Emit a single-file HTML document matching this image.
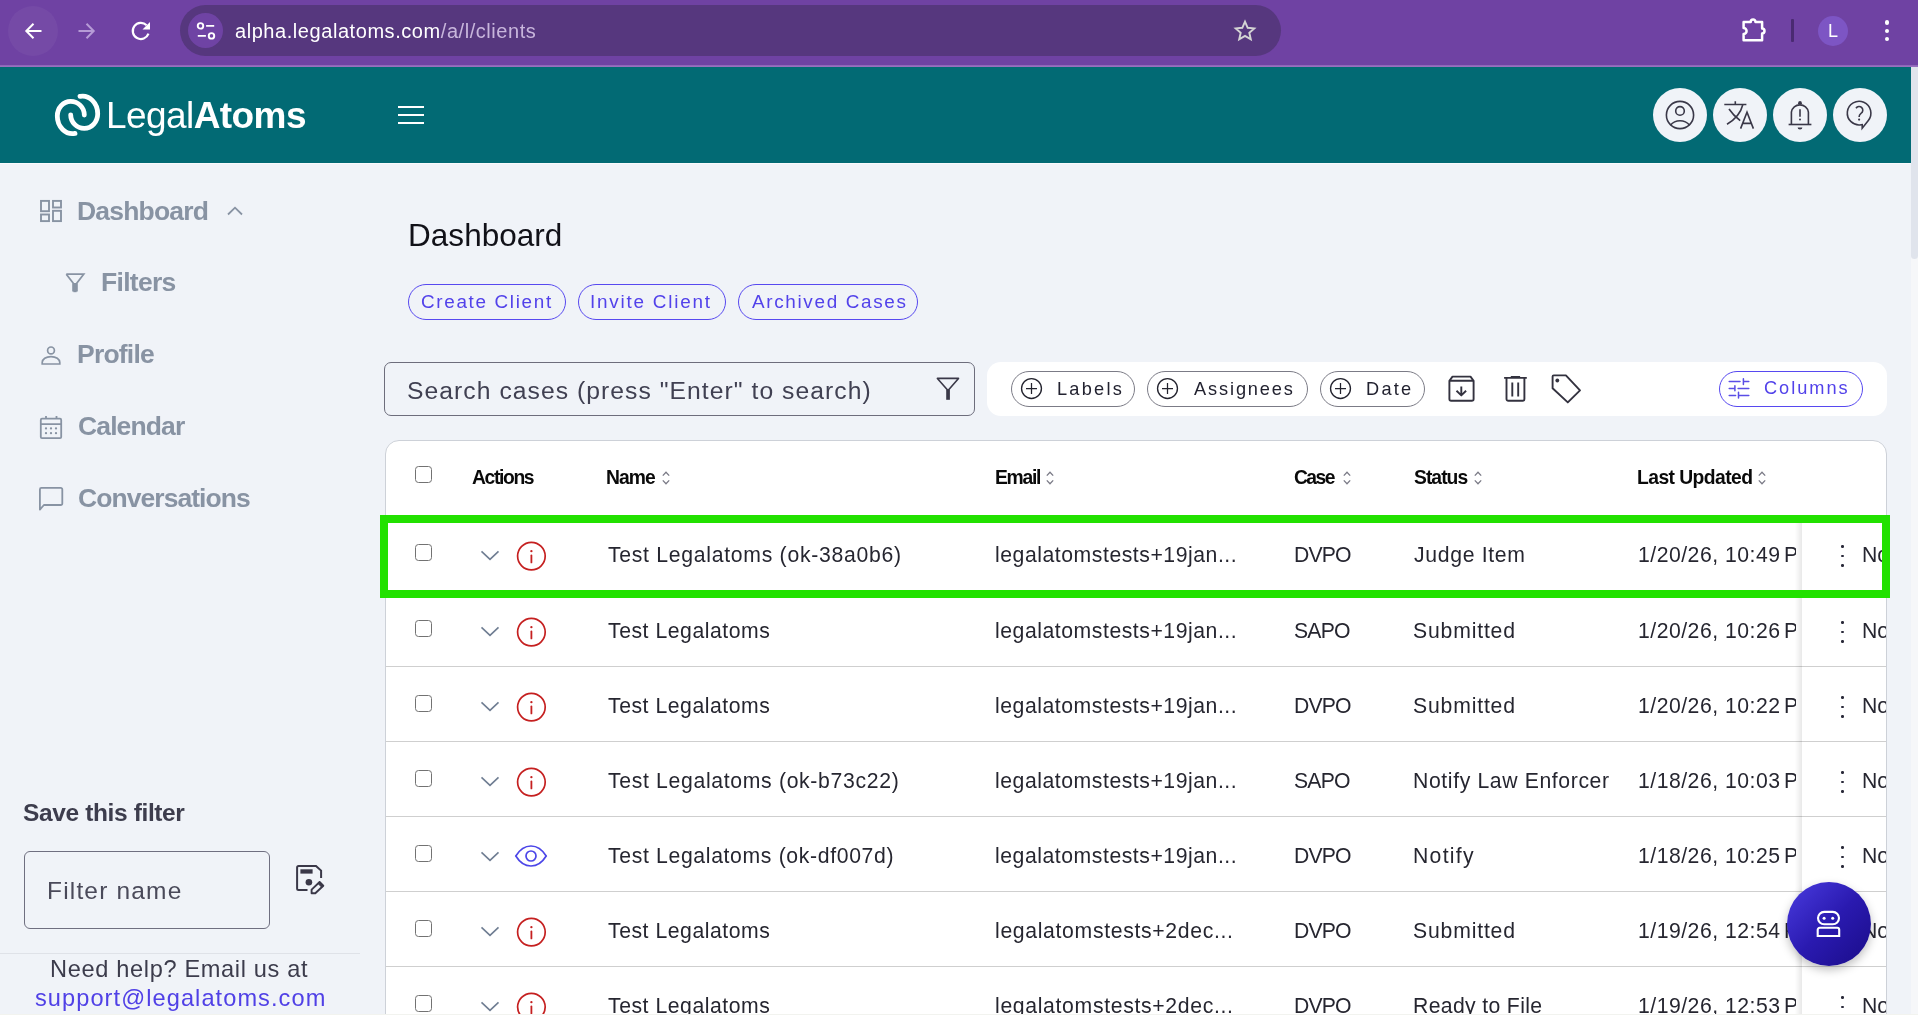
<!DOCTYPE html>
<html><head><meta charset="utf-8">
<style>
html,body{margin:0;padding:0;}
body{width:1918px;height:1015px;overflow:hidden;position:relative;background:#f0f3f8;font-family:"Liberation Sans",sans-serif;}
.a{position:absolute;}
.t{position:absolute;line-height:1;white-space:pre;will-change:transform;}
svg{position:absolute;overflow:visible;}
.cb{position:absolute;width:14.6px;height:14.6px;border:1.7px solid #727272;border-radius:3.5px;background:#fff;}
.pill{position:absolute;border:1px solid #7b7b86;border-radius:19px;box-sizing:border-box;}
.bpill{position:absolute;border:1px solid #5749f0;border-radius:19px;box-sizing:border-box;}
.hc{position:absolute;width:54px;height:54px;border-radius:50%;background:#f0f3f8;top:88px;}
.rb{position:absolute;left:386px;width:1500px;height:1px;background:#cfcfcf;}
</style></head>
<body>
<!-- browser chrome -->
<div class="a" style="left:0;top:0;width:1918px;height:65px;background:#6f42a3;"></div>
<div class="a" style="left:0;top:65px;width:1918px;height:2px;background:linear-gradient(#8a63b6,#9c74c2);"></div>
<div class="a" style="left:8px;top:5.5px;width:50px;height:50px;border-radius:50%;background:rgba(255,255,255,0.045);"></div>
<svg style="left:24px;top:22px" width="18" height="18" viewBox="0 0 18 18"><path d="M17.5 9H2.5M9.5 1.8L2.3 9l7.2 7.2" fill="none" stroke="#fff" stroke-width="2"/></svg>
<svg style="left:78px;top:22px" width="18" height="18" viewBox="0 0 18 18"><path d="M0.5 9H15.5M8.5 1.8L15.7 9l-7.2 7.2" fill="none" stroke="#b69bd6" stroke-width="2"/></svg>
<svg style="left:132px;top:22px" width="18" height="18" viewBox="0 0 18 18"><path d="M16.5 11.7A8.1 8.1 0 1 1 14.6 3.2" fill="none" stroke="#fff" stroke-width="2.2"/><path d="M18 0V7.5H10.5z" fill="#fff"/></svg>
<div class="a" style="left:180px;top:5px;width:1101px;height:51px;border-radius:25.5px;background:#56377e;"></div>
<div class="a" style="left:187.9px;top:13px;width:35.2px;height:35.2px;border-radius:50%;background:#6f43a4;"></div>
<svg style="left:196px;top:21px" width="18" height="18" viewBox="0 0 18 18"><circle cx="4.5" cy="4.9" r="2.75" fill="none" stroke="#fff" stroke-width="1.9"/><path d="M10.1 4.9H18.2M1.8 14.9H9.9" stroke="#fff" stroke-width="1.9"/><circle cx="15.5" cy="14.9" r="2.75" fill="none" stroke="#fff" stroke-width="1.9"/></svg>
<svg style="left:1233px;top:19px" width="24" height="24" viewBox="0 0 24 24"><path d="M12 2.6l2.7 6.2 6.6.6-5 4.4 1.5 6.6L12 16.9l-5.8 3.5 1.5-6.6-5-4.4 6.6-.6z" fill="none" stroke="#d4d4d4" stroke-width="1.9" stroke-linejoin="miter"/></svg>
<svg style="left:1742px;top:17px" width="26" height="26" viewBox="0 0 26 26"><path d="M1.6 4.9H8.7A2.4 2.4 0 0 1 13.5 4.9H20.1V11.6A2.4 2.4 0 0 1 20.1 16.4V23.3H1.6V17A3 3 0 0 0 1.6 11V4.9z" fill="none" stroke="#fff" stroke-width="2.5" stroke-linejoin="round"/></svg>
<div class="a" style="left:1791px;top:19px;width:2.6px;height:23px;background:#4a2a72;border-radius:1px;"></div>
<div class="a" style="left:1818px;top:15.8px;width:30px;height:30px;border-radius:50%;background:#7d55c4;"></div>
<div class="a" style="left:1827.6px;top:21.8px;color:#fff;font:400 18px/1 'Liberation Sans';will-change:transform;">L</div>
<div class="a" style="left:1884.6px;top:20.4px;width:4.2px;height:4.2px;border-radius:50%;background:#fff;"></div>
<div class="a" style="left:1884.6px;top:28.7px;width:4.2px;height:4.2px;border-radius:50%;background:#fff;"></div>
<div class="a" style="left:1884.6px;top:37px;width:4.2px;height:4.2px;border-radius:50%;background:#fff;"></div>

<!-- app header -->
<div class="a" style="left:0;top:67px;width:1911px;height:96px;background:#026a74;"></div>
<div class="a" style="left:0;top:163px;width:1911px;height:1px;background:#f9fafc;"></div>
<svg style="left:50px;top:88px" width="56" height="54" viewBox="0 0 56 54">
<g fill="none" stroke="#fff" stroke-width="4.8" stroke-linecap="round">
<path d="M34.3 27 A13.6 13.6 0 0 0 20.7 13.4 A13.4 14.6 0 0 0 7.3 28 A15.2 17.6 0 0 0 25 45.4"/>
<path d="M34.3 27 A13.6 13.6 0 0 0 20.7 13.4 A13.4 14.6 0 0 0 7.3 28 A15.2 17.6 0 0 0 25 45.4" transform="rotate(180 27.5 26.9)"/>
</g></svg>
<div class="a" style="left:398px;top:106px;width:26px;height:2px;background:#fff;"></div>
<div class="a" style="left:398px;top:114px;width:26px;height:2px;background:#fff;"></div>
<div class="a" style="left:398px;top:122px;width:26px;height:2px;background:#fff;"></div>
<div class="hc" style="left:1653px;"></div>
<div class="hc" style="left:1713px;"></div>
<div class="hc" style="left:1773px;"></div>
<div class="hc" style="left:1833px;"></div>
<!-- person -->
<svg style="left:1665px;top:100px" width="30" height="30" viewBox="0 0 30 30"><g fill="none" stroke="#3a3848" stroke-width="1.6"><circle cx="15" cy="15" r="13.6"/><circle cx="15" cy="10.9" r="4.3"/><path d="M5.4 25.2C8 22 11.3 20.7 15 20.7s7 1.3 9.6 4.5"/></g></svg>
<!-- translate -->
<svg style="left:1722px;top:99px" width="36" height="32" viewBox="0 0 36 32"><g fill="none" stroke="#3a3848" stroke-width="1.6"><path d="M2.3 5.5H24.4M13.3 2.3v3.2M20.9 5.5C19 13 14 20 5 25.2M7 10c3 4.5 6.5 8 11.2 11.7"/><path d="M18.6 29.6L25 13.2l6.4 16.4M20.6 24.4h8.8"/></g></svg>
<!-- bell -->
<svg style="left:1787px;top:100px" width="26" height="31" viewBox="0 0 26 31"><g fill="none" stroke="#3a3848" stroke-width="1.6"><path d="M4.4 24.4V12.2A8.6 8.6 0 0 1 21.4 12.2V24.4"/><path d="M1.6 24.5H24.4"/><path d="M13 9.3v7.5"/></g><circle cx="13" cy="19.6" r="1" fill="#3a3848"/><path d="M10.8 4.2L11.6 1.6Q13 0.5 14.4 1.6L15.2 4.2z" fill="#3a3848"/><path d="M10.6 27.4h4.8a2.4 2.1 0 0 1-4.8 0z" fill="#3a3848"/></svg>
<!-- help -->
<svg style="left:1846px;top:100px" width="28" height="30" viewBox="0 0 28 30"><g fill="none" stroke="#3a3848" stroke-width="1.6"><path d="M15.15 24.72A11.8 11.8 0 1 1 22.14 20.68L16.2 28.2V24.6z"/><path d="M10 8.2A3.7 3.7 0 1 1 15 13.4C13.6 14.5 13.1 15.7 13.1 16.9"/></g><circle cx="13.1" cy="19.6" r="1.1" fill="#3a3848"/></svg>

<!-- scrollbar -->
<div class="a" style="left:1911px;top:67px;width:7px;height:948px;background:#f6f7f9;"></div>
<div class="a" style="left:1911px;top:67px;width:7px;height:192px;background:#e0e4ec;border-radius:0 0 3.5px 3.5px;"></div>

<!-- sidebar icons -->
<svg style="left:39px;top:199px" width="24" height="24" viewBox="0 0 24 24"><g fill="none" stroke="#8893a3" stroke-width="1.9"><rect x="2" y="1.9" width="8" height="10.3"/><rect x="14" y="1.9" width="8" height="6.6"/><rect x="2" y="15.5" width="8" height="6.6"/><rect x="14" y="11.8" width="8" height="10.3"/></g></svg>
<svg style="left:225px;top:204px" width="20" height="14" viewBox="0 0 20 14"><path d="M3 10.5L10 3.7l7 6.8" fill="none" stroke="#8893a3" stroke-width="1.8"/></svg>
<svg style="left:64px;top:272px" width="22" height="22" viewBox="0 0 22 22"><path d="M2.3 2.2h17.4L12.9 11v8.6" fill="none" stroke="#8893a3" stroke-width="1.8" stroke-linejoin="miter"/><path d="M2.3 2.2L9.1 11v8.6" fill="none" stroke="#8893a3" stroke-width="1.8"/><rect x="9.4" y="11" width="3.2" height="9.2" fill="#8893a3"/></svg>
<svg style="left:40px;top:345px" width="22" height="21" viewBox="0 0 22 21"><g fill="none" stroke="#8893a3" stroke-width="1.7"><circle cx="11" cy="5.4" r="3.4"/><path d="M2.2 19V17.6C2.2 14 6 11.6 11 11.6s8.8 2.4 8.8 6v1.4z"/></g></svg>
<svg style="left:39px;top:414px" width="24" height="26" viewBox="0 0 24 26"><g fill="none" stroke="#8893a3" stroke-width="1.8"><rect x="1.8" y="4.7" width="20.4" height="19.4" rx="1.2"/><path d="M1.8 10.2H22.2M7 2v2.7M17.5 2v2.7"/></g><g fill="#8893a3"><circle cx="7" cy="14.4" r="1.15"/><circle cx="12" cy="14.4" r="1.15"/><circle cx="17" cy="14.4" r="1.15"/><circle cx="7" cy="19.2" r="1.15"/><circle cx="12" cy="19.2" r="1.15"/><circle cx="17" cy="19.2" r="1.15"/></g></svg>
<svg style="left:38px;top:486px" width="26" height="26" viewBox="0 0 26 26"><path d="M1.9 23.6V3.4a1.5 1.5 0 0 1 1.5-1.5H22.8a1.5 1.5 0 0 1 1.5 1.5V17.5a1.5 1.5 0 0 1-1.5 1.5H5.9z" fill="none" stroke="#8893a3" stroke-width="1.8" stroke-linejoin="round"/></svg>

<!-- save filter -->
<div class="a" style="left:24px;top:851px;width:246px;height:78px;box-sizing:border-box;border:1.2px solid #6f6f80;border-radius:6px;"></div>
<svg style="left:294px;top:864px" width="32" height="32" viewBox="0 0 32 32"><path d="M13.5 25.9H4.6a1.5 1.5 0 0 1-1.5-1.5V3.4a1.5 1.5 0 0 1 1.5-1.5H22L27.1 6.6V14.1" fill="none" stroke="#3a3848" stroke-width="2"/><rect x="6.4" y="5.3" width="12.2" height="4.3" fill="#3a3848"/><circle cx="14.9" cy="18.2" r="3.3" fill="#3a3848"/><path d="M17.6 25.6V29.3H21.3L29.3 21.7 25.6 18z" fill="none" stroke="#3a3848" stroke-width="1.9" stroke-linejoin="round"/><path d="M25.6 18L29.3 21.7 27.7 23.2 24 19.5z" fill="#3a3848" stroke="#3a3848" stroke-width="1"/></svg>
<div class="a" style="left:0;top:953px;width:360px;height:1px;background:#dfe2e8;"></div>

<!-- buttons -->
<div class="bpill" style="left:408px;top:284px;width:158px;height:36px;"></div>
<div class="bpill" style="left:578px;top:284px;width:148px;height:36px;"></div>
<div class="bpill" style="left:738px;top:284px;width:180px;height:36px;"></div>

<!-- search -->
<div class="a" style="left:384px;top:362px;width:591px;height:54px;box-sizing:border-box;border:1.2px solid #6d6d7c;border-radius:7px;"></div>
<svg style="left:935px;top:377px" width="26" height="24" viewBox="0 0 26 24"><path d="M2.4 1.4H23.5L13 13.6z" fill="none" stroke="#3a3848" stroke-width="1.6" stroke-linejoin="round"/><rect x="11.2" y="12.6" width="3.7" height="10.2" fill="#3a3848"/></svg>

<!-- toolbar -->
<div class="a" style="left:987px;top:362px;width:900px;height:54px;background:#fff;border-radius:14px;"></div>
<div class="pill" style="left:1011px;top:371px;width:124px;height:36px;"></div>
<div class="pill" style="left:1147px;top:371px;width:161px;height:36px;"></div>
<div class="pill" style="left:1320px;top:371px;width:105px;height:36px;"></div>
<svg style="left:1020px;top:377px" width="23" height="23" viewBox="0 0 23 23"><g fill="none" stroke="#23232e"><circle cx="11.5" cy="11.5" r="9.95" stroke-width="1.35"/><path d="M11.5 6v11M6 11.5h11" stroke-width="1.25"/></g></svg>
<svg style="left:1156px;top:377px" width="23" height="23" viewBox="0 0 23 23"><g fill="none" stroke="#23232e"><circle cx="11.5" cy="11.5" r="9.95" stroke-width="1.35"/><path d="M11.5 6v11M6 11.5h11" stroke-width="1.25"/></g></svg>
<svg style="left:1329px;top:377px" width="23" height="23" viewBox="0 0 23 23"><g fill="none" stroke="#23232e"><circle cx="11.5" cy="11.5" r="9.95" stroke-width="1.35"/><path d="M11.5 6v11M6 11.5h11" stroke-width="1.25"/></g></svg>
<!-- archive -->
<svg style="left:1447px;top:374px" width="30" height="30" viewBox="0 0 30 30"><g fill="none" stroke="#33323f" stroke-width="1.9" stroke-linejoin="round"><path d="M2.4 6.7L5.5 2.6H23.5L26.6 6.7V25a1.8 1.8 0 0 1-1.8 1.8H4.2A1.8 1.8 0 0 1 2.4 25z M2.4 6.7H26.6 M14.3 12.4V21.4 M9.5 16.8L14.3 21.4 19.1 16.8"/></g></svg>
<!-- trash -->
<svg style="left:1502px;top:374px" width="28" height="30" viewBox="0 0 28 30"><g fill="none" stroke="#33323f" stroke-width="1.9"><path d="M2.1 3.9H24.8M4.5 3.9V25a1.8 1.8 0 0 0 1.8 1.8H20.6a1.8 1.8 0 0 0 1.8-1.8V3.9M10.3 8.5v14M16.2 8.5v14"/></g><rect x="8.8" y="2" width="9.3" height="1.6" fill="#33323f"/></svg>
<!-- tag -->
<svg style="left:1550px;top:373px" width="34" height="32" viewBox="0 0 34 32"><path d="M2.6 3.6a1.2 1.2 0 0 1 1.2-1.2H15.9L30 17.3 17.8 29.4 2.6 15.3z" fill="none" stroke="#33323f" stroke-width="1.9" stroke-linejoin="round"/><circle cx="7.3" cy="7.5" r="1.9" fill="#33323f"/></svg>
<div class="bpill" style="left:1719px;top:371px;width:144px;height:36px;"></div>
<svg style="left:1728px;top:377px" width="22" height="22" viewBox="0 0 22 22"><g fill="none" stroke="#5a4de6" stroke-width="1.5"><path d="M1.2 4.4H12M15.4 1.7V7.5M15.4 4.4H20.8M1.2 11.5H7M6.9 8.7V13.8M10.1 11.5H20.8M1.2 18.4H7.6M10.5 15.3V21M10.5 18.4H20.8" stroke-linecap="round"/></g></svg>

<!-- table card -->
<div class="a" style="left:385px;top:440px;width:1502px;height:620px;background:#fff;box-sizing:border-box;border:1px solid #cdd1d8;border-radius:14px;"></div>
<div class="rb" style="top:516px;"></div>
<div class="rb" style="top:591px;"></div>
<div class="rb" style="top:666px;"></div>
<div class="rb" style="top:741px;"></div>
<div class="rb" style="top:816px;"></div>
<div class="rb" style="top:891px;"></div>
<div class="rb" style="top:966px;"></div>
<div class="cb" style="left:415px;top:466px;"></div>
<svg style="left:662.0px;top:471px" width="8" height="14" viewBox="0 0 8 14"><path d="M0.8 4.6L4 1.3l3.2 3.3M0.8 9.4L4 12.7l3.2-3.3" fill="none" stroke="#7a7a86" stroke-width="1.3"/></svg>
<svg style="left:1046.3px;top:471px" width="8" height="14" viewBox="0 0 8 14"><path d="M0.8 4.6L4 1.3l3.2 3.3M0.8 9.4L4 12.7l3.2-3.3" fill="none" stroke="#7a7a86" stroke-width="1.3"/></svg>
<svg style="left:1342.5px;top:471px" width="8" height="14" viewBox="0 0 8 14"><path d="M0.8 4.6L4 1.3l3.2 3.3M0.8 9.4L4 12.7l3.2-3.3" fill="none" stroke="#7a7a86" stroke-width="1.3"/></svg>
<svg style="left:1474.0px;top:471px" width="8" height="14" viewBox="0 0 8 14"><path d="M0.8 4.6L4 1.3l3.2 3.3M0.8 9.4L4 12.7l3.2-3.3" fill="none" stroke="#7a7a86" stroke-width="1.3"/></svg>
<svg style="left:1757.7px;top:471px" width="8" height="14" viewBox="0 0 8 14"><path d="M0.8 4.6L4 1.3l3.2 3.3M0.8 9.4L4 12.7l3.2-3.3" fill="none" stroke="#7a7a86" stroke-width="1.3"/></svg>
<div class="cb" style="left:415px;top:544px;"></div>
<svg style="left:480px;top:549px" width="20" height="12" viewBox="0 0 20 12"><path d="M1.5 2.3L10 10.3l8.5-8" fill="none" stroke="#6f7d92" stroke-width="1.6"/></svg>
<svg style="left:516px;top:541px" width="31" height="31" viewBox="0 0 31 31"><circle cx="15.4" cy="15.1" r="13.8" fill="none" stroke="#c52020" stroke-width="1.7"/><path d="M15.4 14.4V21.4" stroke="#c52020" stroke-width="1.8" stroke-linecap="round"/><circle cx="15.4" cy="10.2" r="1.15" fill="#c52020"/></svg>
<div class="cb" style="left:415px;top:620px;"></div>
<svg style="left:480px;top:625px" width="20" height="12" viewBox="0 0 20 12"><path d="M1.5 2.3L10 10.3l8.5-8" fill="none" stroke="#6f7d92" stroke-width="1.6"/></svg>
<svg style="left:516px;top:617px" width="31" height="31" viewBox="0 0 31 31"><circle cx="15.4" cy="15.1" r="13.8" fill="none" stroke="#c52020" stroke-width="1.7"/><path d="M15.4 14.4V21.4" stroke="#c52020" stroke-width="1.8" stroke-linecap="round"/><circle cx="15.4" cy="10.2" r="1.15" fill="#c52020"/></svg>
<div class="cb" style="left:415px;top:695px;"></div>
<svg style="left:480px;top:700px" width="20" height="12" viewBox="0 0 20 12"><path d="M1.5 2.3L10 10.3l8.5-8" fill="none" stroke="#6f7d92" stroke-width="1.6"/></svg>
<svg style="left:516px;top:692px" width="31" height="31" viewBox="0 0 31 31"><circle cx="15.4" cy="15.1" r="13.8" fill="none" stroke="#c52020" stroke-width="1.7"/><path d="M15.4 14.4V21.4" stroke="#c52020" stroke-width="1.8" stroke-linecap="round"/><circle cx="15.4" cy="10.2" r="1.15" fill="#c52020"/></svg>
<div class="cb" style="left:415px;top:770px;"></div>
<svg style="left:480px;top:775px" width="20" height="12" viewBox="0 0 20 12"><path d="M1.5 2.3L10 10.3l8.5-8" fill="none" stroke="#6f7d92" stroke-width="1.6"/></svg>
<svg style="left:516px;top:767px" width="31" height="31" viewBox="0 0 31 31"><circle cx="15.4" cy="15.1" r="13.8" fill="none" stroke="#c52020" stroke-width="1.7"/><path d="M15.4 14.4V21.4" stroke="#c52020" stroke-width="1.8" stroke-linecap="round"/><circle cx="15.4" cy="10.2" r="1.15" fill="#c52020"/></svg>
<div class="cb" style="left:415px;top:845px;"></div>
<svg style="left:480px;top:850px" width="20" height="12" viewBox="0 0 20 12"><path d="M1.5 2.3L10 10.3l8.5-8" fill="none" stroke="#6f7d92" stroke-width="1.6"/></svg>
<svg style="left:514px;top:844px" width="34" height="24" viewBox="0 0 34 24"><g fill="none" stroke="#4c46e8" stroke-width="1.7"><path d="M1.8 12C6 5.2 11 2 17 2s11 3.2 15.2 10C28 18.8 23 22 17 22S6 18.8 1.8 12z"/><circle cx="17" cy="12" r="5"/></g></svg>
<div class="cb" style="left:415px;top:920px;"></div>
<svg style="left:480px;top:925px" width="20" height="12" viewBox="0 0 20 12"><path d="M1.5 2.3L10 10.3l8.5-8" fill="none" stroke="#6f7d92" stroke-width="1.6"/></svg>
<svg style="left:516px;top:917px" width="31" height="31" viewBox="0 0 31 31"><circle cx="15.4" cy="15.1" r="13.8" fill="none" stroke="#c52020" stroke-width="1.7"/><path d="M15.4 14.4V21.4" stroke="#c52020" stroke-width="1.8" stroke-linecap="round"/><circle cx="15.4" cy="10.2" r="1.15" fill="#c52020"/></svg>
<div class="cb" style="left:415px;top:995px;"></div>
<svg style="left:480px;top:1000px" width="20" height="12" viewBox="0 0 20 12"><path d="M1.5 2.3L10 10.3l8.5-8" fill="none" stroke="#6f7d92" stroke-width="1.6"/></svg>
<svg style="left:516px;top:992px" width="31" height="31" viewBox="0 0 31 31"><circle cx="15.4" cy="15.1" r="13.8" fill="none" stroke="#c52020" stroke-width="1.7"/><path d="M15.4 14.4V21.4" stroke="#c52020" stroke-width="1.8" stroke-linecap="round"/><circle cx="15.4" cy="10.2" r="1.15" fill="#c52020"/></svg>
<div class="t" style="left:235.10px;top:20.6px;font-size:20px;font-weight:400;color:#ffffff;letter-spacing:0.560px;">alpha.legalatoms.com<span style="color:#c8b6dc">/a/l/clients</span></div>
<div class="t" style="left:105.90px;top:96.7px;font-size:37px;font-weight:400;color:#ffffff;letter-spacing:-0.573px;">Legal<b style="font-weight:700">Atoms</b></div>
<div class="t" style="left:76.80px;top:197.6px;font-size:26.5px;font-weight:700;color:#8893a3;letter-spacing:-0.803px;">Dashboard</div>
<div class="t" style="left:100.85px;top:268.8px;font-size:26.5px;font-weight:700;color:#8893a3;letter-spacing:-0.705px;">Filters</div>
<div class="t" style="left:77.20px;top:341.3px;font-size:26.5px;font-weight:700;color:#8893a3;letter-spacing:-0.795px;">Profile</div>
<div class="t" style="left:78.10px;top:413.4px;font-size:26.5px;font-weight:700;color:#8893a3;letter-spacing:-0.872px;">Calendar</div>
<div class="t" style="left:78.10px;top:485.1px;font-size:26.5px;font-weight:700;color:#8893a3;letter-spacing:-0.944px;">Conversations</div>
<div class="t" style="left:23.15px;top:800.8px;font-size:24.5px;font-weight:700;color:#3d3d4d;letter-spacing:-0.372px;">Save this filter</div>
<div class="t" style="left:46.80px;top:878.9px;font-size:24.5px;font-weight:400;color:#4a4a5a;letter-spacing:1.175px;">Filter name</div>
<div class="t" style="left:50.25px;top:957.6px;font-size:23.6px;font-weight:400;color:#3c3c4c;letter-spacing:0.650px;">Need help? Email us at</div>
<div class="t" style="left:35.35px;top:986.6px;font-size:23.6px;font-weight:400;color:#5040e6;letter-spacing:1.068px;">support@legalatoms.com</div>
<div class="t" style="left:408.00px;top:220.1px;font-size:31.5px;font-weight:400;color:#111118;letter-spacing:0.036px;">Dashboard</div>
<div class="t" style="left:421.10px;top:293.0px;font-size:18.9px;font-weight:400;color:#5242ea;letter-spacing:1.658px;">Create Client</div>
<div class="t" style="left:589.65px;top:293.0px;font-size:18.9px;font-weight:400;color:#5242ea;letter-spacing:1.779px;">Invite Client</div>
<div class="t" style="left:751.55px;top:293.0px;font-size:18.9px;font-weight:400;color:#5242ea;letter-spacing:1.666px;">Archived Cases</div>
<div class="t" style="left:407.15px;top:378.8px;font-size:24.7px;font-weight:400;color:#404052;letter-spacing:1.045px;">Search cases (press "Enter" to search)</div>
<div class="t" style="left:1056.70px;top:379.6px;font-size:18.2px;font-weight:400;color:#222230;letter-spacing:2.238px;">Labels</div>
<div class="t" style="left:1194.05px;top:379.6px;font-size:18.2px;font-weight:400;color:#222230;letter-spacing:1.879px;">Assignees</div>
<div class="t" style="left:1366.30px;top:379.6px;font-size:18.2px;font-weight:400;color:#222230;letter-spacing:2.259px;">Date</div>
<div class="t" style="left:1764.35px;top:379.2px;font-size:18.2px;font-weight:400;color:#5242ea;letter-spacing:1.981px;">Columns</div>
<div class="t" style="left:472.25px;top:467.9px;font-size:19.3px;font-weight:700;color:#0a0a0a;letter-spacing:-1.353px;">Actions</div>
<div class="t" style="left:606.10px;top:467.9px;font-size:19.3px;font-weight:700;color:#0a0a0a;letter-spacing:-0.939px;">Name</div>
<div class="t" style="left:994.75px;top:467.9px;font-size:19.3px;font-weight:700;color:#0a0a0a;letter-spacing:-1.276px;">Email</div>
<div class="t" style="left:1294.25px;top:467.9px;font-size:19.3px;font-weight:700;color:#0a0a0a;letter-spacing:-1.570px;">Case</div>
<div class="t" style="left:1414.00px;top:467.9px;font-size:19.3px;font-weight:700;color:#0a0a0a;letter-spacing:-0.957px;">Status</div>
<div class="t" style="left:1636.70px;top:467.9px;font-size:19.3px;font-weight:700;color:#0a0a0a;letter-spacing:-0.563px;">Last Updated</div>
<div class="t" style="left:607.75px;top:544.1px;font-size:21.2px;font-weight:400;color:#262630;letter-spacing:0.716px;">Test Legalatoms (ok-38a0b6)</div>
<div class="t" style="left:995.30px;top:544.1px;font-size:21.2px;font-weight:400;color:#262630;letter-spacing:0.548px;">legalatomstests+19jan...</div>
<div class="t" style="left:1293.70px;top:544.1px;font-size:21.2px;font-weight:400;color:#262630;letter-spacing:-0.866px;">DVPO</div>
<div class="t" style="left:1414.20px;top:544.1px;font-size:21.2px;font-weight:400;color:#262630;letter-spacing:0.675px;">Judge Item</div>
<div class="t" style="left:607.75px;top:620.1px;font-size:21.2px;font-weight:400;color:#262630;letter-spacing:0.537px;">Test Legalatoms</div>
<div class="t" style="left:995.30px;top:620.1px;font-size:21.2px;font-weight:400;color:#262630;letter-spacing:0.548px;">legalatomstests+19jan...</div>
<div class="t" style="left:1293.70px;top:620.1px;font-size:21.2px;font-weight:400;color:#262630;letter-spacing:-0.814px;">SAPO</div>
<div class="t" style="left:1413.30px;top:620.1px;font-size:21.2px;font-weight:400;color:#262630;letter-spacing:0.824px;">Submitted</div>
<div class="t" style="left:607.75px;top:695.1px;font-size:21.2px;font-weight:400;color:#262630;letter-spacing:0.537px;">Test Legalatoms</div>
<div class="t" style="left:995.30px;top:695.1px;font-size:21.2px;font-weight:400;color:#262630;letter-spacing:0.548px;">legalatomstests+19jan...</div>
<div class="t" style="left:1293.70px;top:695.1px;font-size:21.2px;font-weight:400;color:#262630;letter-spacing:-0.866px;">DVPO</div>
<div class="t" style="left:1413.30px;top:695.1px;font-size:21.2px;font-weight:400;color:#262630;letter-spacing:0.824px;">Submitted</div>
<div class="t" style="left:607.75px;top:770.1px;font-size:21.2px;font-weight:400;color:#262630;letter-spacing:0.672px;">Test Legalatoms (ok-b73c22)</div>
<div class="t" style="left:995.30px;top:770.1px;font-size:21.2px;font-weight:400;color:#262630;letter-spacing:0.548px;">legalatomstests+19jan...</div>
<div class="t" style="left:1293.70px;top:770.1px;font-size:21.2px;font-weight:400;color:#262630;letter-spacing:-0.814px;">SAPO</div>
<div class="t" style="left:1413.30px;top:770.1px;font-size:21.2px;font-weight:400;color:#262630;letter-spacing:0.621px;">Notify Law Enforcer</div>
<div class="t" style="left:607.75px;top:845.1px;font-size:21.2px;font-weight:400;color:#262630;letter-spacing:0.655px;">Test Legalatoms (ok-df007d)</div>
<div class="t" style="left:995.30px;top:845.1px;font-size:21.2px;font-weight:400;color:#262630;letter-spacing:0.548px;">legalatomstests+19jan...</div>
<div class="t" style="left:1293.70px;top:845.1px;font-size:21.2px;font-weight:400;color:#262630;letter-spacing:-0.866px;">DVPO</div>
<div class="t" style="left:1413.30px;top:845.1px;font-size:21.2px;font-weight:400;color:#262630;letter-spacing:1.296px;">Notify</div>
<div class="t" style="left:607.75px;top:920.1px;font-size:21.2px;font-weight:400;color:#262630;letter-spacing:0.537px;">Test Legalatoms</div>
<div class="t" style="left:995.30px;top:920.1px;font-size:21.2px;font-weight:400;color:#262630;letter-spacing:0.669px;">legalatomstests+2dec...</div>
<div class="t" style="left:1293.70px;top:920.1px;font-size:21.2px;font-weight:400;color:#262630;letter-spacing:-0.866px;">DVPO</div>
<div class="t" style="left:1413.30px;top:920.1px;font-size:21.2px;font-weight:400;color:#262630;letter-spacing:0.824px;">Submitted</div>
<div class="t" style="left:607.75px;top:995.1px;font-size:21.2px;font-weight:400;color:#262630;letter-spacing:0.537px;">Test Legalatoms</div>
<div class="t" style="left:995.30px;top:995.1px;font-size:21.2px;font-weight:400;color:#262630;letter-spacing:0.669px;">legalatomstests+2dec...</div>
<div class="t" style="left:1293.70px;top:995.1px;font-size:21.2px;font-weight:400;color:#262630;letter-spacing:-0.866px;">DVPO</div>
<div class="t" style="left:1413.30px;top:995.1px;font-size:21.2px;font-weight:400;color:#262630;letter-spacing:0.351px;">Ready to File</div>
<div class="a" style="left:1630px;top:516px;width:166px;height:499px;overflow:hidden;">
<div class="t" style="left:7.6px;top:28.1px;font-size:21.2px;color:#262630;letter-spacing:0.5px;">1/20/26, 10:49<span style="margin-left:3.5px">PM</span></div>
<div class="t" style="left:7.6px;top:104.1px;font-size:21.2px;color:#262630;letter-spacing:0.5px;">1/20/26, 10:26<span style="margin-left:3.5px">PM</span></div>
<div class="t" style="left:7.6px;top:179.1px;font-size:21.2px;color:#262630;letter-spacing:0.5px;">1/20/26, 10:22<span style="margin-left:3.5px">PM</span></div>
<div class="t" style="left:7.6px;top:254.1px;font-size:21.2px;color:#262630;letter-spacing:0.5px;">1/18/26, 10:03<span style="margin-left:3.5px">PM</span></div>
<div class="t" style="left:7.6px;top:329.1px;font-size:21.2px;color:#262630;letter-spacing:0.5px;">1/18/26, 10:25<span style="margin-left:3.5px">PM</span></div>
<div class="t" style="left:7.6px;top:404.1px;font-size:21.2px;color:#262630;letter-spacing:0.5px;">1/19/26, 12:54<span style="margin-left:3.5px">PM</span></div>
<div class="t" style="left:7.6px;top:479.1px;font-size:21.2px;color:#262630;letter-spacing:0.5px;">1/19/26, 12:53<span style="margin-left:3.5px">PM</span></div>
</div>
<div class="a" style="left:1795px;top:516px;width:7px;height:499px;background:linear-gradient(to right,rgba(0,0,0,0),rgba(0,0,0,0.035) 40%,rgba(0,0,0,0.09));"></div>
<div class="a" style="left:1802px;top:516px;width:84px;height:499px;overflow:hidden;">
<div class="a" style="left:39.2px;top:29.2px;width:2.4px;height:2.4px;border-radius:50%;background:#2a2a3a;"></div>
<div class="a" style="left:39.2px;top:38.8px;width:2.4px;height:2.4px;border-radius:50%;background:#2a2a3a;"></div>
<div class="a" style="left:39.2px;top:48.4px;width:2.4px;height:2.4px;border-radius:50%;background:#2a2a3a;"></div>
<div class="t" style="left:60px;top:28.1px;font-size:21.2px;color:#262630;">No</div>
<div class="a" style="left:39.2px;top:105.2px;width:2.4px;height:2.4px;border-radius:50%;background:#2a2a3a;"></div>
<div class="a" style="left:39.2px;top:114.8px;width:2.4px;height:2.4px;border-radius:50%;background:#2a2a3a;"></div>
<div class="a" style="left:39.2px;top:124.4px;width:2.4px;height:2.4px;border-radius:50%;background:#2a2a3a;"></div>
<div class="t" style="left:60px;top:104.1px;font-size:21.2px;color:#262630;">No</div>
<div class="a" style="left:39.2px;top:180.2px;width:2.4px;height:2.4px;border-radius:50%;background:#2a2a3a;"></div>
<div class="a" style="left:39.2px;top:189.8px;width:2.4px;height:2.4px;border-radius:50%;background:#2a2a3a;"></div>
<div class="a" style="left:39.2px;top:199.4px;width:2.4px;height:2.4px;border-radius:50%;background:#2a2a3a;"></div>
<div class="t" style="left:60px;top:179.1px;font-size:21.2px;color:#262630;">No</div>
<div class="a" style="left:39.2px;top:255.2px;width:2.4px;height:2.4px;border-radius:50%;background:#2a2a3a;"></div>
<div class="a" style="left:39.2px;top:264.8px;width:2.4px;height:2.4px;border-radius:50%;background:#2a2a3a;"></div>
<div class="a" style="left:39.2px;top:274.4px;width:2.4px;height:2.4px;border-radius:50%;background:#2a2a3a;"></div>
<div class="t" style="left:60px;top:254.1px;font-size:21.2px;color:#262630;">No</div>
<div class="a" style="left:39.2px;top:330.2px;width:2.4px;height:2.4px;border-radius:50%;background:#2a2a3a;"></div>
<div class="a" style="left:39.2px;top:339.8px;width:2.4px;height:2.4px;border-radius:50%;background:#2a2a3a;"></div>
<div class="a" style="left:39.2px;top:349.4px;width:2.4px;height:2.4px;border-radius:50%;background:#2a2a3a;"></div>
<div class="t" style="left:60px;top:329.1px;font-size:21.2px;color:#262630;">No</div>
<div class="a" style="left:39.2px;top:405.2px;width:2.4px;height:2.4px;border-radius:50%;background:#2a2a3a;"></div>
<div class="a" style="left:39.2px;top:414.8px;width:2.4px;height:2.4px;border-radius:50%;background:#2a2a3a;"></div>
<div class="a" style="left:39.2px;top:424.4px;width:2.4px;height:2.4px;border-radius:50%;background:#2a2a3a;"></div>
<div class="t" style="left:60px;top:404.1px;font-size:21.2px;color:#262630;">No</div>
<div class="a" style="left:39.2px;top:480.2px;width:2.4px;height:2.4px;border-radius:50%;background:#2a2a3a;"></div>
<div class="a" style="left:39.2px;top:489.8px;width:2.4px;height:2.4px;border-radius:50%;background:#2a2a3a;"></div>
<div class="a" style="left:39.2px;top:499.4px;width:2.4px;height:2.4px;border-radius:50%;background:#2a2a3a;"></div>
<div class="t" style="left:60px;top:479.1px;font-size:21.2px;color:#262630;">No</div>
</div>
<div class="a" style="left:1802px;top:666px;width:84px;height:1px;background:#cfcfcf;"></div>
<div class="a" style="left:1802px;top:741px;width:84px;height:1px;background:#cfcfcf;"></div>
<div class="a" style="left:1802px;top:816px;width:84px;height:1px;background:#cfcfcf;"></div>
<div class="a" style="left:1802px;top:891px;width:84px;height:1px;background:#cfcfcf;"></div>
<div class="a" style="left:1802px;top:966px;width:84px;height:1px;background:#cfcfcf;"></div>
<div class="a" style="left:380px;top:515px;width:1510px;height:83px;box-sizing:border-box;border:8px solid #22e100;"></div>
<div class="a" style="left:1787px;top:882px;width:84px;height:84px;border-radius:50%;background:linear-gradient(135deg,#4a3ce0 0%,#2a1ab0 50%,#1a0c88 100%);box-shadow:0 4px 10px rgba(0,0,0,0.25);"></div>
<svg style="left:1815px;top:909px" width="28" height="30" viewBox="0 0 28 30"><g fill="none" stroke="#fff" stroke-width="2.1"><rect x="3" y="2.9" width="21" height="12.4" rx="6.2"/><path d="M2.7 27V20.8a2 2 0 0 1 2-2H22.2a2 2 0 0 1 2 2V27z"/></g><circle cx="9.1" cy="9.2" r="1.5" fill="#fff"/><circle cx="17.7" cy="9.2" r="1.5" fill="#fff"/></svg>
<div class="a" style="left:0;top:1014px;width:1918px;height:1px;background:#f2f3ef;"></div>
</body></html>
